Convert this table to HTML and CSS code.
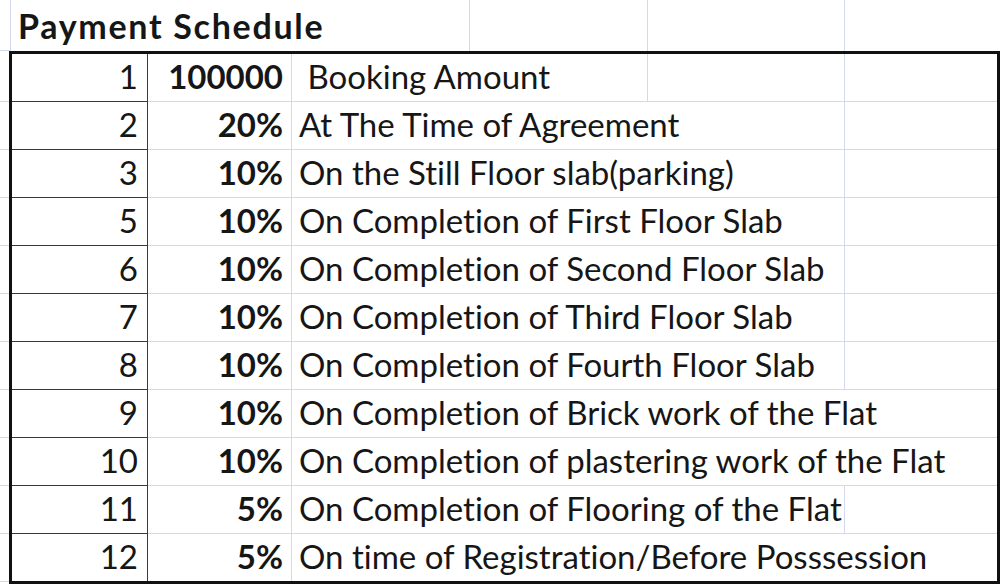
FILE: index.html
```html
<!DOCTYPE html>
<html lang="en">
<head>
<meta charset="utf-8">
<title>Payment Schedule</title>
<link rel="stylesheet" href="styles.css">
</head>
<body>
<div class="sheet">
  <div class="title-row">
    <div class="lead"></div>
    <div class="cell title">Payment Schedule</div>
    <div class="cell"></div>
    <div class="cell"></div>
    <div class="cell last"></div>
  </div>
  <div class="body">
    <div class="lead-col">
      <div class="lead-cell"></div><div class="lead-cell"></div><div class="lead-cell"></div>
      <div class="lead-cell"></div><div class="lead-cell"></div><div class="lead-cell"></div>
      <div class="lead-cell"></div><div class="lead-cell"></div><div class="lead-cell"></div>
      <div class="lead-cell"></div><div class="lead-cell"></div>
    </div>
    <div class="table">
      <div class="row"><div class="c no">1</div><div class="c amt">100000</div><div class="c desc to-d">&nbsp;Booking Amount</div><div class="c"></div><div class="c last"></div></div>
      <div class="row"><div class="c no">2</div><div class="c amt">20%</div><div class="c desc to-e">At The Time of Agreement</div><div class="c last"></div></div>
      <div class="row"><div class="c no">3</div><div class="c amt">10%</div><div class="c desc to-e">On the Still Floor slab(parking)</div><div class="c last"></div></div>
      <div class="row"><div class="c no">5</div><div class="c amt">10%</div><div class="c desc to-e">On Completion of First Floor Slab</div><div class="c last"></div></div>
      <div class="row"><div class="c no">6</div><div class="c amt">10%</div><div class="c desc to-e">On Completion of Second Floor Slab</div><div class="c last"></div></div>
      <div class="row"><div class="c no">7</div><div class="c amt">10%</div><div class="c desc to-e">On Completion of Third Floor Slab</div><div class="c last"></div></div>
      <div class="row"><div class="c no">8</div><div class="c amt">10%</div><div class="c desc to-e">On Completion of Fourth Floor Slab</div><div class="c last"></div></div>
      <div class="row"><div class="c no">9</div><div class="c amt">10%</div><div class="c desc to-f last">On Completion of Brick work of the Flat</div></div>
      <div class="row"><div class="c no">10</div><div class="c amt">10%</div><div class="c desc to-f last">On Completion of plastering work of the Flat</div></div>
      <div class="row"><div class="c no">11</div><div class="c amt">5%</div><div class="c desc to-e">On Completion of Flooring of the Flat</div><div class="c last"></div></div>
      <div class="row"><div class="c no">12</div><div class="c amt">5%</div><div class="c desc to-f last">On time of Registration/Before Posssession</div></div>
    </div>
  </div>
</div>
</body>
</html>
```
FILE: styles.css
```css
html, body {
  margin: 0;
  padding: 0;
  background: #ffffff;
}
body {
  width: 1000px;
  height: 588px;
  overflow: hidden;
  font-family: "Lato", "Liberation Sans", sans-serif;
  font-size: 33px;
  color: #161616;
  font-variant-ligatures: none;
}
.sheet {
  display: flex;
  flex-direction: column;
}
.title-row {
  display: grid;
  grid-template-columns: 11px 459px 178px 197px 155px;
  height: 51px;
}
.title-row .lead {
  border-right: 1px solid #d3d9ea;
  border-bottom: 1px solid #d3d9ea;
}
.title-row .cell {
  border-right: 1px solid #d3d9ea;
}
.title-row .cell.last {
  border-right: none;
}
.title {
  font-weight: 700;
  font-size: 34px;
  letter-spacing: 1.7px;
  line-height: 1;
  display: flex;
  align-items: flex-end;
  padding: 0 0 8px 7px;
  white-space: nowrap;
}
.body {
  display: flex;
}
.lead-col {
  width: 9px;
  padding-top: 3px;
  display: flex;
  flex-direction: column;
}
.lead-cell {
  height: 47px;
  border-bottom: 1px solid #d3d9ea;
}
.table {
  border: 3px solid #111111;
  display: flex;
  flex-direction: column;
}
.row {
  display: grid;
  grid-template-columns: 136px 144px 178px 178px 197px 152px;
  height: 48px;
}
.row:last-child {
  height: 47px;
}
.c {
  border-right: 1px solid #d3d9ea;
  border-bottom: 1px solid #d3d9ea;
  display: flex;
  align-items: flex-end;
  line-height: 1;
  padding-bottom: 8px;
  white-space: nowrap;
  min-width: 0;
}
.row:last-child .c {
  border-bottom: none;
}
.c.last {
  border-right: none;
}
.c.no {
  justify-content: flex-end;
  padding-right: 9px;
  border-right: 1px solid #3a3a3a;
  border-bottom: 1px solid #3a3a3a;
}
.row:last-child .c.no {
  border-bottom: none;
}
.c.amt {
  justify-content: flex-end;
  padding-right: 8px;
  font-weight: 700;
}
.c.desc {
  padding-left: 7px;
}
.to-d { grid-column: 3 / span 2; }
.to-e { grid-column: 3 / span 3; }
.to-f { grid-column: 3 / span 4; }
```
